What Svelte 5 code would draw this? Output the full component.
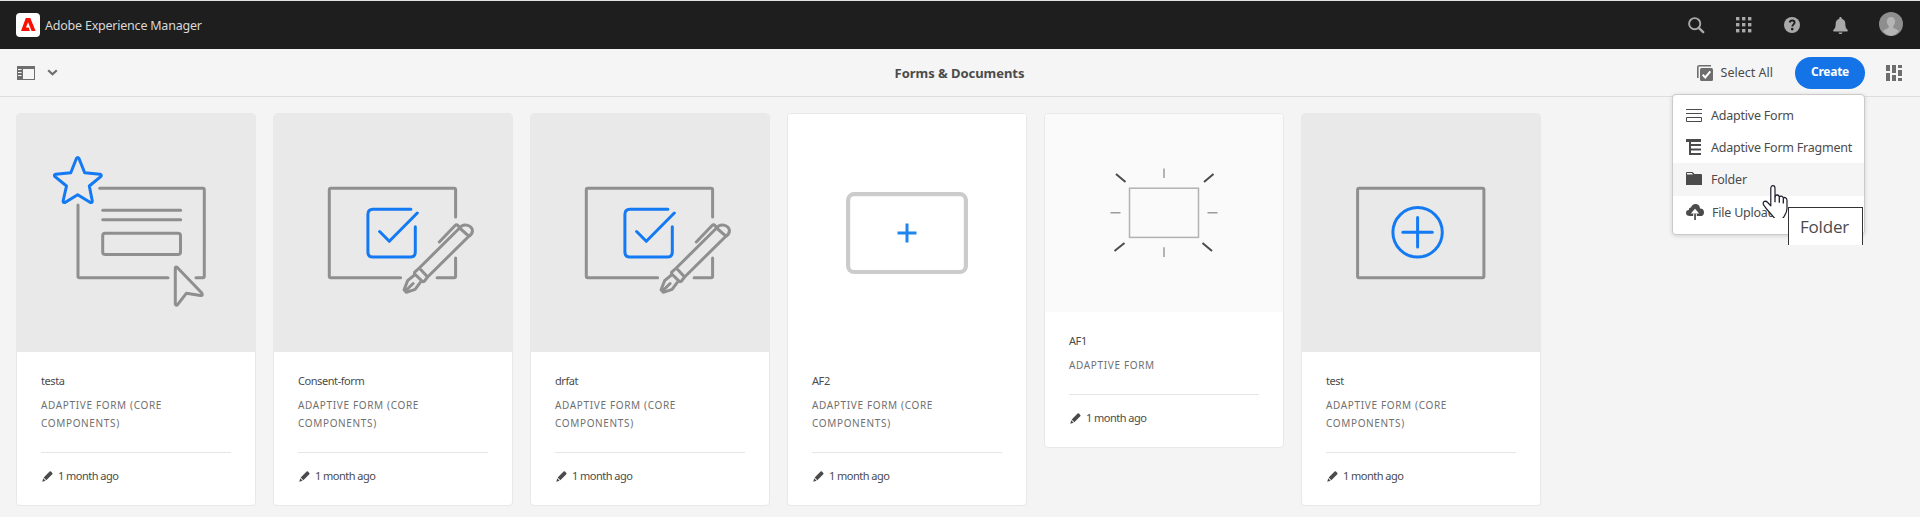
<script>
  const core = 'Adaptive Form (Core Components)';
  const cards = [
    { title: 'testa', type: core, art: 'star' },
    { title: 'Consent-form', type: core, art: 'sign' },
    { title: 'drfat', type: core, art: 'sign' },
    { title: 'AF2', type: core, art: 'plus' },
    { title: 'AF1', type: 'Adaptive Form', art: 'glow' },
    { title: 'test', type: core, art: 'circle' }
  ];
  const menu = [
    { label: 'Adaptive Form', icon: 'form' },
    { label: 'Adaptive Form Fragment', icon: 'fragment' },
    { label: 'Folder', icon: 'folder', active: true },
    { label: 'File Upload', icon: 'upload' }
  ];
</script>

<div class="page">
  <header class="shell">
    <svg class="logo" width="24" height="24" viewBox="0 0 24 24">
      <rect width="24" height="24" rx="4" fill="#fff" />
      <path d="M9.8 5h4.5l5.3 13h-4L12.1 9.3 9.9 14.6h2.7l1.3 3.4H5z" fill="#fa0f00" />
    </svg>
    <span class="brand">Adobe Experience Manager</span>
    <nav class="tools">
      <svg width="17" height="17" viewBox="0 0 17 17" fill="none" stroke="#a9a9a9"><circle cx="6.7" cy="6.7" r="5.6" stroke-width="1.9" /><path d="M10.8 10.8l4.4 4.4" stroke-width="2.4" stroke-linecap="round" /></svg>
      <svg width="16" height="16" viewBox="0 0 16 16" fill="#a9a9a9">
        {#each [0, 6, 12] as y}{#each [0, 6, 12] as x}<rect {x} {y} width="3.4" height="3.4" />{/each}{/each}
      </svg>
      <svg width="16" height="16" viewBox="0 0 16 16"><circle cx="8" cy="8" r="8" fill="#a9a9a9" /><path d="M5.7 5.5C6 4 7 3.5 8.1 3.5c1.500 0 2.500.8 2.500 2.100 0 1.700-2.300 1.900-2.300 4" fill="none" stroke="#1e1e1e" stroke-width="1.900" /><circle cx="8.200" cy="12.100" r="1.300" fill="#1e1e1e" /></svg>
      <svg width="15" height="17" viewBox="0 0 15 17" fill="#a9a9a9"><path d="M7.500 0c.8 0 1.200.5 1.200 1.300v.5c2.300.6 3.600 2.300 3.600 4.800 0 3.400.7 4.900 2.200 6.200.6.600.3 1.700-.5 1.700H1c-.8 0-1.100-1.100-.5-1.700C2 11.500 2.700 10 2.700 6.600c0-2.500 1.300-4.200 3.600-4.800v-.5C6.300.5 6.700 0 7.500 0zM5.500 15.500h4c-.2 1-1 1.500-2 1.500s-1.800-.5-2-1.500z" /></svg>
      <svg class="avatar" width="24" height="24" viewBox="0 0 24 24"><circle cx="12" cy="12" r="12" fill="#8e8e8e" /><path d="M12 5c2.500 0 4.100 1.700 4.100 4.300 0 1.900-.7 3.700-1.900 4.800v1.500c.1 1 3.700 1.300 5.700 3.500A12 12 0 0 1 12 24a12 12 0 0 1-7.900-4.900c2-2.200 5.600-2.500 5.700-3.500v-1.500c-1.200-1.100-1.900-2.900-1.900-4.800C7.900 6.700 9.500 5 12 5z" fill="#b5b5b5" /></svg>
    </nav>
  </header>

  <div class="bar">
    <div class="left">
      <svg width="18" height="14" viewBox="0 0 18 14"><path fill="#6e6e6e" fill-rule="evenodd" d="M0 0h18v14H0zM6 3v10h11V3zM1 3v1h3.500V3zM1 6v1h3.500V6zM1 9v1h3.500V9z" /></svg>
      <svg width="11" height="7" viewBox="0 0 11 7"><path d="M1.200 1.200L5.500 5.300 9.800 1.200" fill="none" stroke="#6e6e6e" stroke-width="2.200" /></svg>
    </div>
    <h1>Forms &amp; Documents</h1>
    <div class="right">
      <svg width="16" height="16" viewBox="0 0 16 16"><path d="M.8 13V2.300Q.8.800 2.300.8h11.700" fill="none" stroke="#6e6e6e" stroke-width="1.600" /><rect x="3" y="3" width="13" height="13" rx="1.500" fill="#6e6e6e" /><path d="M5.700 9.700l2.600 2.700 5-6" fill="none" stroke="#fff" stroke-width="2" /></svg>
      <span class="select">Select All</span>
      <button>Create</button>
      <svg class="view" width="16" height="16" viewBox="0 0 16 16" fill="#6e6e6e"><path d="M0 0h4v6H0zM0 8h4v8H0zM6 0h4v8H6zM6 10h4v6H6zM12 0h4v3h-4zM12 5h4v6h-4zM12 13h4v3h-4z" /></svg>
    </div>

    <div class="menu">
      {#each menu as item}
        <div class={['item', item.active && 'active', item.icon]}>
          {#if item.icon === 'form'}
            <svg width="16" height="13" viewBox="0 0 16 13" fill="none" stroke="#4b4b4b"><path d="M0 .5h16M0 4.500h16M.5 8.500h15v4H.5z" /></svg>
          {:else if item.icon === 'fragment'}
            <svg width="16" height="16" viewBox="0 0 16 16" fill="#4b4b4b"><path d="M0 0h15v3H5v2h10v2H5v2.500h10v2H5V14h10v2H3V3H0z" /></svg>
          {:else if item.icon === 'folder'}
            <svg width="16" height="13" viewBox="0 0 16 13" fill="#4b4b4b"><path d="M0 13V1Q0 0 1 0h5.500l2 2H15q1 0 1 1v10zM1 1v1.500h6L5.800 1z" fill-rule="evenodd" /></svg>
          {:else}
            <svg width="18" height="16" viewBox="0 0 18 16"><path d="M4 12Q0 12 0 8.800 0 6.300 2.900 6 2.600 3.500 5 3.500 6 0 9.500 0q4.200 0 4.500 4.600 4 .2 4 3.800 0 3.600-4 3.600z" fill="#4b4b4b" /><path d="M9 4.700l4.200 4.800H10V12H8V9.500H4.800z" fill="#fff" /><path d="M7.200 9.500h3.600V12H7.200z" fill="#fff" /><path d="M8.200 9.500h1.700V16H8.200z" fill="#4b4b4b" /></svg>
          {/if}
          <span>{item.label}</span>
        </div>
      {/each}
      <div class="tip">Folder</div>
      <svg class="hand" width="26" height="33" viewBox="0 .8 26 29" preserveAspectRatio="none"><path d="M8.800 19V3.800C8.800.6 13 .6 13 3.800v7.400c.3-2.500 4.300-2 4.300.6 .3-2 4-1.600 4 .9 .4-1.600 3.700-1 3.700 1.600v7.200c0 3.600-2 5.500-3.300 7.600-1.500 2.300-7.700 2.400-9.600.4C8.700 26 3.400 21 1.300 17.800c-.8-2.600 2.500-3.600 4.200-1.800z" fill="#fff" stroke="#1d1d2b" stroke-width="1.200" stroke-linejoin="round" /><path d="M13 11v5M17.300 12v4.500M21.300 13v4" stroke="#1d1d2b" stroke-width="1.300" /></svg>
    </div>
  </div>

  <main>
    {#each cards as card}
      <article>
        <div class={['thumb', card.art]}>
          {#if card.art === 'star'}
            <svg viewBox="0 0 238 238" class="line">
              <path d="M82.600 74.300H185.800q1.500 0 1.500 1.500V162.200q0 1.500-1.500 1.500H179M151 163.700H62.500q-1.500 0-1.500-1.500V91M85.700 96.300h78M85.700 105.800h78" />
              <rect x="85.700" y="119.200" width="77.800" height="21.300" rx="2.500" />
              <path d="M160.500 153.700L184.600 178.800Q186.500 181.600 183.500 181.500L169.300 179.300 160.800 190.400Q159 192.300 158.300 190V154Q158.500 152 160.500 153.700z" />
              <path class="blue" d="M62 44.500L67.700 58.700 83 60.200Q85.200 61 83.700 62.700L72.300 72 75.300 87Q75.100 89.300 73 88.300L60.700 80.700 48.400 88.300Q46.300 89.300 46.100 87L49.500 72 38 62.700Q36.500 61 38.700 60.200L53.800 58.700 59.400 44.500Q60.700 42.300 62 44.500z" />
            </svg>
          {:else if card.art === 'sign'}
            <svg viewBox="0.4 0 238 238" class="line">
              <path d="M182 103V75.800q0-1.500-1.500-1.500H57.200q-1.500 0-1.500 1.500V162.200q0 1.500 1.500 1.500H127M163.500 163.700h17q1.500 0 1.500-1.500V144" />
              <path d="M145.700 154L186 114M154 163L195.500 122M186 114l9.500 8.300M186 114c4-5.500 11-2.500 12.500 1 1 3 0 5-3 7.300M165.700 128L181.500 111.500q1.500-1.500 2.700-.2l1.800 2.700M145.700 154l8.300 9-3.300 4.200q-1.500 1-2.500-.3l-6.800-6.700q-1-1.300 0-2.300zM141.500 160.500l-7.500 6.200-3.500 9 2.200 2.600 8.800-3 5-6.700M132.700 176.300l6.800-6.800" />
              <path class="blue" d="M137.300 95.300H99.300q-5 0-5 5V138q0 5 5 5H136.700q5 0 5-5V112.700M106 117.500l9.700 9.800L143.700 99" />
            </svg>
          {:else if card.art === 'plus'}
            <svg viewBox="0 0 238 238"><rect x="60.100" y="80.200" width="117.800" height="77.800" rx="6" fill="none" stroke="#cbcbcb" stroke-width="4.200" /><path d="M119 109.500v19M109.500 119h19" stroke="#1f86ee" stroke-width="3" /></svg>
          {:else if card.art === 'glow'}
            <svg viewBox="0 0 238 198" fill="none" stroke="#9c9c9c" stroke-width="1.500"><rect x="84.500" y="74.200" width="69" height="49.200" stroke="#b0b3b1" /><path d="M119 54.500V64M119 133.300V143M65.500 98.700h10M162.500 98.700h10" /><path stroke="#4b4b4b" stroke-width="2" d="M71 60l9.500 8M168.500 60l-9.500 8M69.500 137l10-8M157.500 129l9.500 8" /></svg>
          {:else}
            <svg viewBox="0.4 0 238 238" class="line"><rect x="56" y="74.300" width="126.300" height="89.400" rx="1.500" /><g class="blue"><circle cx="116" cy="118.300" r="24.700" /><path d="M116 103.500v29.500M101.200 118.300h29.500" /></g></svg>
          {/if}
        </div>
        <div class="body">
          <div class="title">{card.title}</div>
          <div class="meta">{card.type}</div>
          <div class="date">
            <svg width="11" height="11" viewBox="0 0 11 11" fill="#4b4b4b"><path d="M7.600.6Q8.300 0 9 .6l1.300 1.300q.6.700 0 1.400L4.300 9.300 1.700 6.600zM1.200 7.300l2.400 2.400L.3 10.800z" /></svg>
            <span>1 month ago</span>
          </div>
        </div>
      </article>
    {/each}
  </main>
</div>

<style>
  :global(body) { background: #f4f4f4; }
  .page { box-sizing: border-box; height: 517px; overflow: hidden; border-top: 1px solid #dfe3e1; background: #f4f4f4; color: #4b4b4b; font-family: "Noto Sans", "Open Sans", sans-serif; font-size: 12.5px; letter-spacing: -.22px; }
  svg { display: block; flex: none; }
  .shell { height: 48px; background: #1e1e1e; display: flex; align-items: center; padding: 0 17px 0 16px; }
  .brand { margin-left: 5px; color: #d8d8d8; }
  .tools { margin-left: auto; display: flex; align-items: center; }
  .tools svg:nth-child(2) { margin-left: 31px; }
  .tools svg:nth-child(3) { margin-left: 32px; }
  .tools svg:nth-child(4) { margin-left: 33px; }
  .tools .avatar { margin: 0 0 2px 31px; }
  .bar { position: relative; box-sizing: border-box; height: 48px; border-bottom: 1px solid #dedede; display: grid; grid-template-columns: 1fr auto 1fr; align-items: center; padding: 0 18px 0 17px; background: #f5f5f5; }
  .left { display: flex; align-items: center; gap: 12px; }
  h1 { margin: 0; font-size: 13px; line-height: 18px; font-weight: 700; letter-spacing: -.05px; }
  .right { display: flex; align-items: center; justify-content: flex-end; }
  .select { margin: 0 22px 0 8px; letter-spacing: 0; }
  button { width: 70px; height: 32px; border: 0; border-radius: 16px; padding: 0 0 3px; background: #1473e6; color: #fff; font: 700 12px "Noto Sans", sans-serif; letter-spacing: -.25px; }
  .view { margin-left: 21px; }
  .menu { position: absolute; z-index: 2; left: 1672px; top: 45px; width: 193px; height: 141px; box-sizing: border-box; padding-top: 4px; border: 1px solid #cacaca; border-radius: 4px; background: #fff; box-shadow: 0 1px 4px rgba(0, 0, 0, .15); }
  .item { display: flex; align-items: center; height: 32px; padding-left: 13px; gap: 9px; white-space: nowrap; }
  .item.active { height: 33px; background: #f5f5f5; }
  .item.active svg { margin-bottom: 2px; }
  .item.upload { gap: 8px; }
  .tip { position: absolute; left: 115px; top: 112px; width: 75px; height: 38px; box-sizing: border-box; border: 1px solid #333; border-bottom: 0; background: #fff; padding-left: 11px; font: 17px/38px "Open Sans", sans-serif; letter-spacing: -.2px; }
  .hand { position: absolute; left: 89px; top: 90px; }
  main { display: flex; align-items: flex-start; gap: 17px; padding: 16px; }
  article { box-sizing: border-box; width: 240px; flex: none; border: 1px solid #e8e8e8; border-radius: 4px; background: #fff; overflow: hidden; }
  .thumb { height: 238px; background: #e9e9e9; }
  .thumb.plus { background: #fff; }
  .thumb.glow { height: 198px; background: #fafafa; }
  .line { fill: none; stroke: #8f8f8f; stroke-width: 3; stroke-linecap: round; stroke-linejoin: round; }
  .blue { stroke: #147af3; }
  .body { padding: 20px 24px; }
  .title { font-size: 11px; line-height: 18px; letter-spacing: -.43px; }
  .meta { margin-top: 6px; padding-bottom: 20px; border-bottom: 1px solid #e5e5e5; font-size: 10px; line-height: 18px; letter-spacing: .65px; text-transform: uppercase; color: #707070; }
  .date { display: flex; align-items: center; gap: 5px; padding: 14px 0 0 1px; font-size: 11px; line-height: 18px; letter-spacing: -.53px; }
</style>
